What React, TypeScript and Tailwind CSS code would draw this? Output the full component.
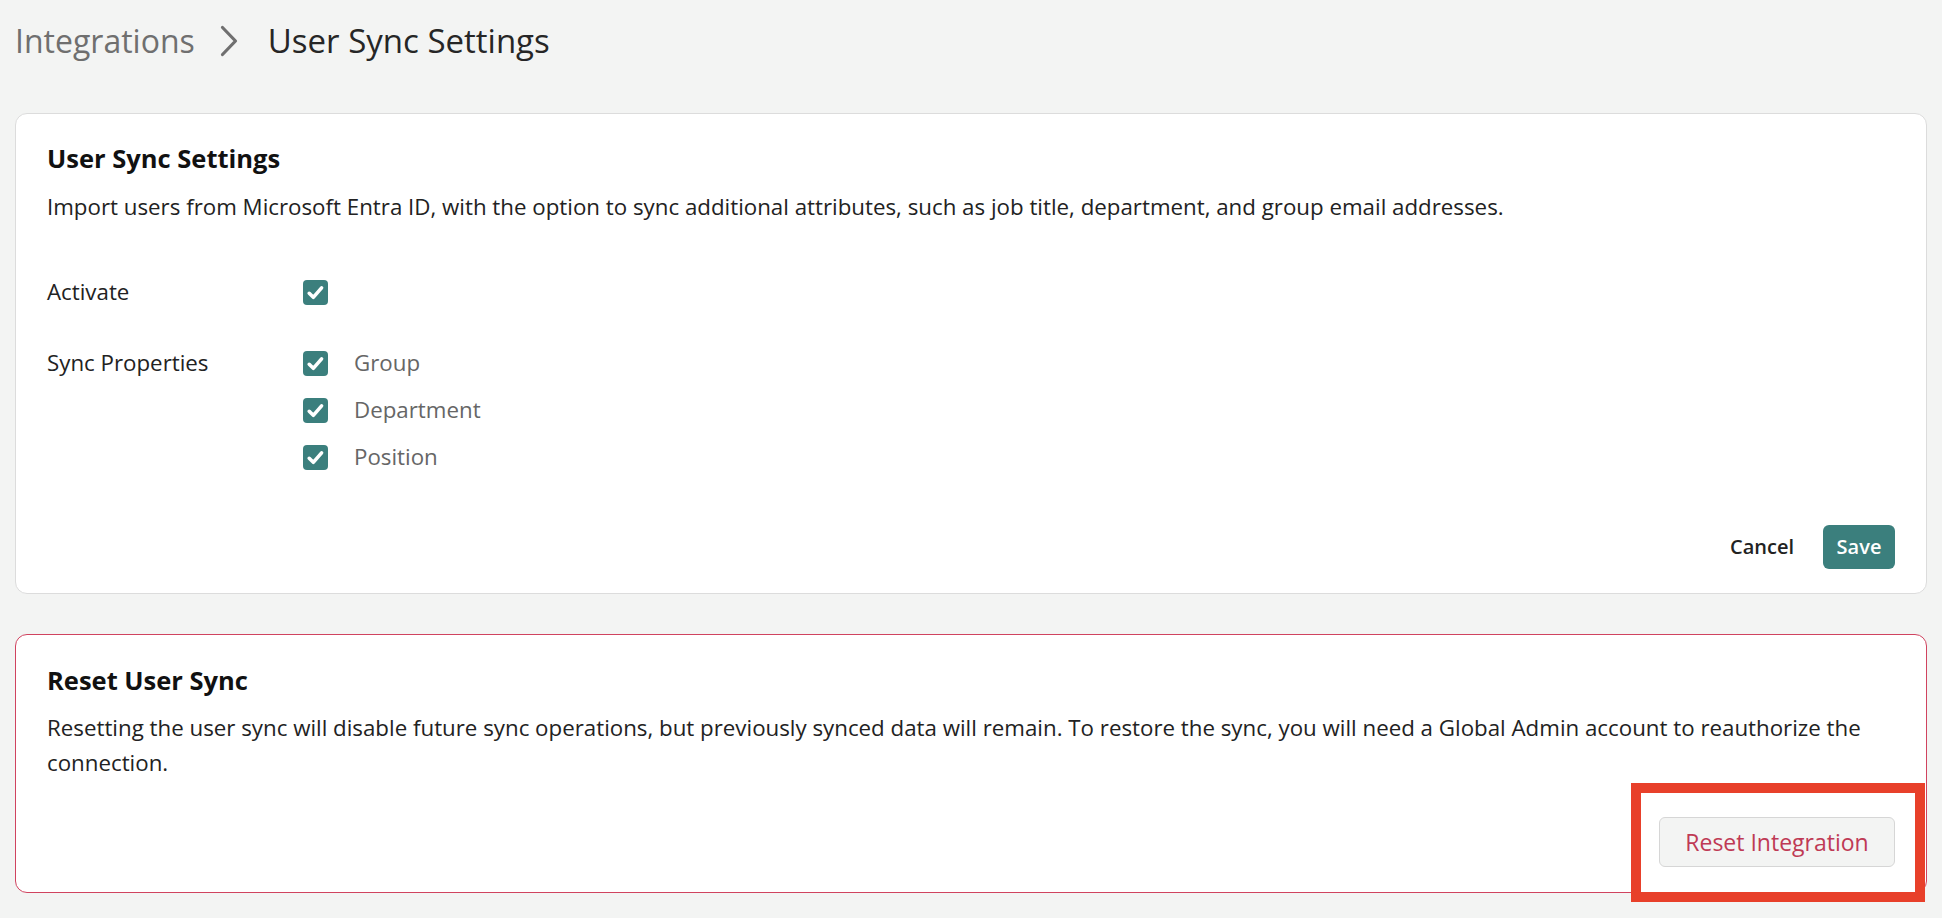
import { useState } from "react";

const font = { fontFamily: "'Open Sans', 'Noto Sans', sans-serif" };

const Check = ({ checked, onToggle }: { checked: boolean; onToggle: () => void }) => (
  <button
    type="button"
    onClick={onToggle}
    className={
      checked
        ? "flex h-[25px] w-[25px] items-center justify-center rounded-[4px] bg-[#3b7f7d]"
        : "flex h-[25px] w-[25px] items-center justify-center rounded-[4px] border-2 border-[#9aa5a4] bg-white"
    }
  >
    {checked && (
      <svg width="21" height="21" viewBox="0 0 20 20" fill="none">
        <path d="M4 10.8l3.9 3.8 7.9-9" stroke="white" strokeWidth="3.4" strokeLinecap="round" strokeLinejoin="round" />
      </svg>
    )}
  </button>
);

export default function App() {
  const [active, setActive] = useState(true);
  const [props, setProps] = useState({ Group: true, Department: true, Position: true });

  const toggle = (key: keyof typeof props) => setProps((p) => ({ ...p, [key]: !p[key] }));

  return (
    <div className="min-h-screen bg-[#f3f4f3] px-[15px] pb-6 text-[#222]" style={font}>
      {/* breadcrumb */}
      <div className="flex h-[82px] items-center text-[32px]">
        <span className="text-[#6f6f6f]">Integrations</span>
        <svg className="ml-[24px] mr-[29px]" width="20" height="34" viewBox="0 0 20 34" fill="none">
          <path d="M3.5 3.5l13 13.5-13 13.5" stroke="#6f6f6f" strokeWidth="3.2" strokeLinecap="round" strokeLinejoin="round" />
        </svg>
        <span className="text-[33px] font-medium text-[#262626]">User Sync Settings</span>
      </div>

      <div className="mt-[31px] rounded-[12px] border border-[#dcdcdc] bg-white px-[31px] pb-[24px] pt-[27px]">
        <h2 className="text-[25.5px] font-bold leading-[34px] text-[#111]">User Sync Settings</h2>
        <p className="mt-[17px] text-[22.3px] leading-[30px]">
          Import users from Microsoft Entra ID, with the option to sync additional attributes, such as job title, department, and group email addresses.
        </p>

        <div className="mt-[55px] flex h-[30px] items-center text-[22.3px]">
          <span className="w-[256px]">Activate</span>
          <Check checked={active} onToggle={() => setActive(!active)} />
        </div>

        <div className="mt-[41px] flex text-[22.3px]">
          <span className="w-[256px] leading-[30px]">Sync Properties</span>
          <div className="flex flex-col gap-[17px]">
            {(Object.keys(props) as (keyof typeof props)[]).map((key) => (
              <div key={key} className="flex h-[30px] items-center gap-[26px]">
                <Check checked={props[key]} onToggle={() => toggle(key)} />
                <span className="text-[#666]">{key}</span>
              </div>
            ))}
          </div>
        </div>

        <div className="mt-[53px] flex items-center justify-end gap-[14px]">
          <button type="button" className="px-[15px] text-[20px] font-semibold text-[#222]">
            Cancel
          </button>
          <button type="button" className="h-[44px] w-[72px] rounded-[6px] bg-[#3b7f7d] text-[20px] font-semibold text-white">
            Save
          </button>
        </div>
      </div>

      <div className="mt-[40px] rounded-[12px] border border-[#d0435f] bg-white px-[31px] pb-[25px] pt-[28px]">
        <h2 className="text-[25.5px] font-bold leading-[34px] text-[#111]">Reset User Sync</h2>
        <p className="mt-[13px] text-[22.3px] leading-[35px]">
          Resetting the user sync will disable future sync operations, but previously synced data will remain. To restore the sync, you will need a Global Admin account to reauthorize the connection.
        </p>
        <div className="mt-[37px] flex justify-end">
          <div className="relative">
            <button
              type="button"
              className="h-[50px] w-[236px] rounded-[6px] border border-[#d6d6d6] bg-[#f3f4f3] text-[23px] text-[#bf3a55]"
            >
              Reset Integration
            </button>
            <div className="pointer-events-none absolute -bottom-[35px] -left-[28px] -right-[30px] -top-[34px] border-[10px] border-[#e8402a]" />
          </div>
        </div>
      </div>
    </div>
  );
}
